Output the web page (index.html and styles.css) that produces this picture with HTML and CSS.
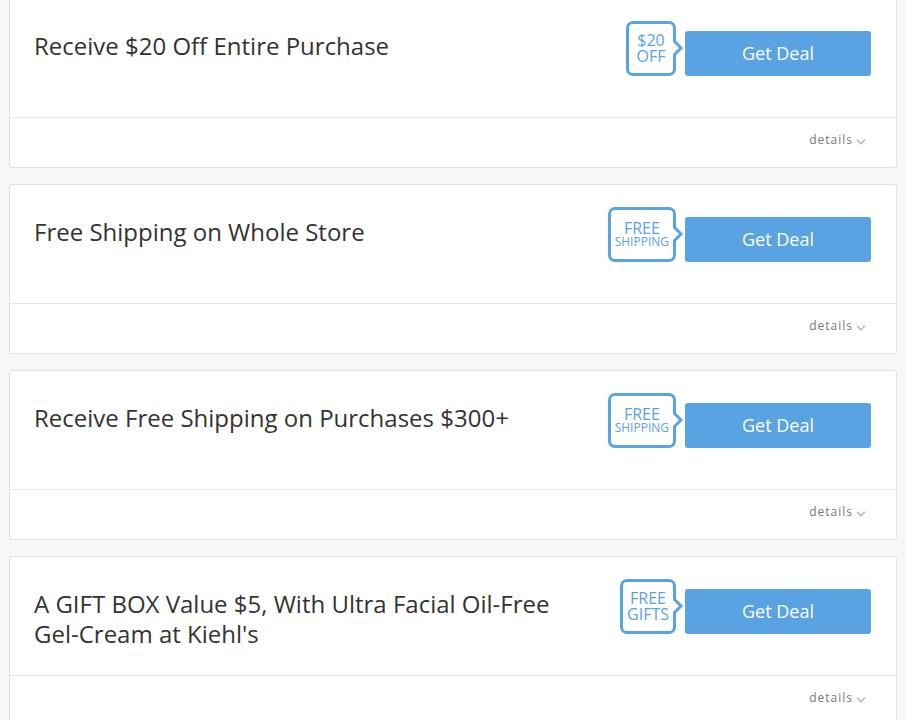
FILE: index.html
```html
<!DOCTYPE html>
<html lang="en">
  <head>
    <meta charset="UTF-8" />
    <meta name="viewport" content="width=device-width, initial-scale=1.0" />
    <title>Deals</title>
    <link rel="stylesheet" href="styles.css">
  </head>
  <body>
    <main class="deals">
      <article class="deal">
        <div class="deal-main">
          <h2 class="deal-title">Receive $20 Off Entire Purchase</h2>
          <div class="deal-badge">
            <span>$20</span>
            <span>OFF</span>
            <svg class="badge-tip" viewBox="0 0 11 16" aria-hidden="true">
              <path class="tip-gap" d="M0 1h3v14H0z" />
              <path class="tip-line" d="M1.500 0v1.500L8 8l-6.500 6.500V16" />
            </svg>
          </div>
          <button type="button" class="deal-btn">Get Deal</button>
        </div>
        <div class="deal-footer">
          <button type="button" class="details-btn">
            details
            <svg class="chevron" viewBox="0 0 10 6" aria-hidden="true">
              <path d="M1 0.700l4 4 4-4" />
            </svg>
          </button>
        </div>
      </article>

      <article class="deal">
        <div class="deal-main">
          <h2 class="deal-title">Free Shipping on Whole Store</h2>
          <div class="deal-badge">
            <span>FREE</span>
            <span class="badge-small">SHIPPING</span>
            <svg class="badge-tip" viewBox="0 0 11 16" aria-hidden="true">
              <path class="tip-gap" d="M0 1h3v14H0z" />
              <path class="tip-line" d="M1.500 0v1.500L8 8l-6.500 6.500V16" />
            </svg>
          </div>
          <button type="button" class="deal-btn">Get Deal</button>
        </div>
        <div class="deal-footer">
          <button type="button" class="details-btn">
            details
            <svg class="chevron" viewBox="0 0 10 6" aria-hidden="true">
              <path d="M1 0.700l4 4 4-4" />
            </svg>
          </button>
        </div>
      </article>

      <article class="deal">
        <div class="deal-main">
          <h2 class="deal-title">Receive Free Shipping on Purchases $300+</h2>
          <div class="deal-badge">
            <span>FREE</span>
            <span class="badge-small">SHIPPING</span>
            <svg class="badge-tip" viewBox="0 0 11 16" aria-hidden="true">
              <path class="tip-gap" d="M0 1h3v14H0z" />
              <path class="tip-line" d="M1.500 0v1.500L8 8l-6.500 6.500V16" />
            </svg>
          </div>
          <button type="button" class="deal-btn">Get Deal</button>
        </div>
        <div class="deal-footer">
          <button type="button" class="details-btn">
            details
            <svg class="chevron" viewBox="0 0 10 6" aria-hidden="true">
              <path d="M1 0.700l4 4 4-4" />
            </svg>
          </button>
        </div>
      </article>

      <article class="deal">
        <div class="deal-main">
          <h2 class="deal-title">A GIFT BOX Value $5, With Ultra Facial Oil-Free Gel-Cream at Kiehl's</h2>
          <div class="deal-badge">
            <span>FREE</span>
            <span>GIFTS</span>
            <svg class="badge-tip" viewBox="0 0 11 16" aria-hidden="true">
              <path class="tip-gap" d="M0 1h3v14H0z" />
              <path class="tip-line" d="M1.500 0v1.500L8 8l-6.500 6.500V16" />
            </svg>
          </div>
          <button type="button" class="deal-btn">Get Deal</button>
        </div>
        <div class="deal-footer">
          <button type="button" class="details-btn">
            details
            <svg class="chevron" viewBox="0 0 10 6" aria-hidden="true">
              <path d="M1 0.700l4 4 4-4" />
            </svg>
          </button>
        </div>
      </article>
    </main>
  </body>
</html>
```
FILE: styles.css
```css
* {
  margin: 0;
  padding: 0;
  box-sizing: border-box;
}

body {
  font-family: "Open Sans", Arial, sans-serif;
  background-color: #f7f7f7;
  color: #333;
  overflow-x: hidden;
}

.deals {
  display: flex;
  flex-direction: column;
  gap: 16px;
  margin-top: -2px;
  padding: 0 8px 16px 9px;
}

.deal {
  background-color: #fff;
  border: 1px solid #e1e1e1;
  border-radius: 3px;
}

.deal-main {
  display: flex;
  align-items: flex-start;
  min-height: 119px;
  padding: 22px 25px 22px 24px;
  border-bottom: 1px solid #e8e8e8;
}

.deal-title {
  flex: 1;
  margin-top: 10px;
  padding-right: 40px;
  font-size: 24px;
  font-weight: 400;
  line-height: 30px;
}

/* speech bubble pointing at the button */
.deal-badge {
  position: relative;
  display: flex;
  flex-direction: column;
  align-items: center;
  justify-content: center;
  min-width: 50px;
  height: 55px;
  margin-right: 9px;
  padding: 0 4px 2px;
  border: 3px solid #5aa3e3;
  border-radius: 7px;
  color: #5aa3e3;
  font-size: 16px;
  line-height: 16px;
}

.badge-small {
  font-size: 12px;
  line-height: 12px;
}

.badge-tip {
  position: absolute;
  top: 16px;
  right: -11px;
  width: 11px;
  height: 16px;
}

.tip-gap {
  fill: #fff;
}

.tip-line {
  fill: none;
  stroke: #5aa3e3;
  stroke-width: 3;
}

.deal-btn {
  width: 186px;
  height: 45px;
  margin-top: 10px;
  padding-bottom: 2px;
  border: none;
  border-radius: 3px;
  background-color: #5aa3e3;
  color: #fff;
  font-family: inherit;
  font-size: 18px;
  cursor: pointer;
}

.deal-btn:hover {
  background-color: #4793d6;
}

.deal-footer {
  display: flex;
  justify-content: flex-end;
  padding: 12px 30px 17px;
}

.details-btn {
  display: flex;
  align-items: center;
  gap: 3px;
  border: none;
  background: none;
  color: #777;
  font-family: inherit;
  font-size: 12px;
  line-height: 20px;
  letter-spacing: 1px;
  cursor: pointer;
}

.chevron {
  width: 10px;
  height: 6px;
  margin-top: 3px;
  fill: none;
  stroke: #b5b5b5;
  stroke-width: 1.500;
}
```
